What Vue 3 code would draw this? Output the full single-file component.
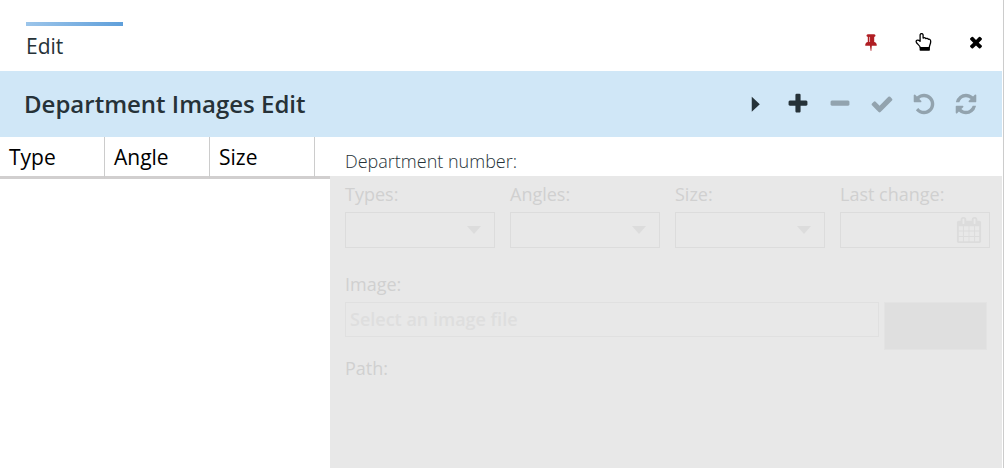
<script setup>
const times = 'M1490 1322q0 40-28 68l-136 136q-28 28-68 28t-68-28l-294-294-294 294q-28 28-68 28t-68-28l-136-136q-28-28-28-68t28-68l294-294-294-294q-28-28-28-68t28-68l136-136q28-28 68-28t68 28l294 294 294-294q28-28 68-28t68 28l136 136q28 28 28 68t-28 68l-294 294 294 294q28 28 28 68z'
const pin = 'M800 864v-448q0-14-9-23t-23-9-23 9-9 23v448q0 14 9 23t23 9 23-9 9-23zm672 352q0 26-19 45t-45 19h-429l-51 483q-2 12-10.5 20.5t-20.5 8.5h-1q-27 0-32-27l-76-485h-404q-26 0-45-19t-19-45q0-123 78.5-221.5t177.5-98.5v-512q-52 0-90-38t-38-90 38-90 90-38h640q52 0 90 38t38 90-38 90-90 38v512q99 0 177.5 98.5t78.5 221.5z'
const calendar = 'M192 1664h288v-288h-288v288zm352 0h320v-288h-320v288zm-352-352h288v-320h-288v320zm352 0h320v-320h-320v320zm-352-384h288v-288h-288v288zm736 736h320v-288h-320v288zm-384-736h320v-288h-320v288zm768 736h288v-288h-288v288zm-384-352h320v-320h-320v320zm-352-864v-288q0-13-9.5-22.5t-22.5-9.5h-64q-13 0-22.5 9.5t-9.5 22.5v288q0 13 9.5 22.5t22.5 9.5h64q13 0 22.5-9.5t9.5-22.5zm736 864h288v-320h-288v320zm-384-384h320v-288h-320v288zm384 0h288v-288h-288v288zm32-480v-288q0-13-9.5-22.5t-22.5-9.5h-64q-13 0-22.5 9.5t-9.5 22.5v288q0 13 9.5 22.5t22.5 9.5h64q13 0 22.5-9.5t9.5-22.5zm384-64v1280q0 52-38 90t-90 38h-1408q-52 0-90-38t-38-90v-1280q0-52 38-90t90-38h128v-96q0-66 47-113t113-47h64q66 0 113 47t47 113v96h384v-96q0-66 47-113t113-47h64q66 0 113 47t47 113v96h128q52 0 90 38t38 90z'

const tools = [
  { name: 'Next', path: 'M580 360v1120l600-560z' },
  { name: 'Add', path: 'M1600 736v192q0 40-28 68t-68 28h-416v416q0 40-28 68t-68 28h-192q-40 0-68-28t-28-68v-416h-416q-40 0-68-28t-28-68v-192q0-40 28-68t68-28h416v-416q0-40 28-68t68-28h192q40 0 68 28t28 68v416h416q40 0 68 28t28 68z' },
  { name: 'Remove', disabled: true, path: 'M1600 736v192q0 40-28 68t-68 28h-1216q-40 0-68-28t-28-68v-192q0-40 28-68t68-28h1216q40 0 68 28t28 68z' },
  { name: 'Save', disabled: true, path: 'M1671 566q0 40-28 68l-724 724-136 136q-28 28-68 28t-68-28l-136-136-362-362q-28-28-28-68t28-68l136-136q28-28 68-28t68 28l294 295 656-657q28-28 68-28t68 28l136 136q28 28 28 68z' },
  { name: 'Undo', disabled: true, path: 'M1664 896q0 156-61 298t-164 245-245 164-298 61q-172 0-327-72.5t-264-204.5q-7-10-6.5-22.5t8.5-20.5l137-138q10-9 25-9 16 2 23 12 73 95 179 147t225 52q104 0 198.5-40.5t163.5-109.5 109.5-163.5 40.5-198.5-40.5-198.5-109.5-163.5-163.5-109.5-198.5-40.5q-98 0-188 35.5t-160 101.5l137 138q31 30 14 69-17 40-59 40h-448q-26 0-45-19t-19-45v-448q0-42 40-59 39-17 69 14l130 129q107-101 244.5-156.5t284.5-55.5q156 0 298 61t245 164 164 245 61 298z' },
  { name: 'Refresh', disabled: true, path: 'M1639 1056q0 5-1 7-64 268-268 434.5t-478 166.5q-146 0-282.5-55t-243.5-157l-129 129q-19 19-45 19t-45-19-19-45v-448q0-26 19-45t45-19h448q26 0 45 19t19 45-19 45l-137 137q71 66 161 102t187 36q134 0 250-65t186-179q11-17 53-117 8-23 30-23h192q13 0 22.5 9.5t9.5 22.5zm25-800v448q0 26-19 45t-45 19h-448q-26 0-45-19t-19-45 19-45l138-138q-148-137-349-137-134 0-250 65t-186 179q-11 17-53 117-8 23-30 23h-199q-13 0-22.5-9.5t-9.5-22.5v-7q65-268 270-434.5t480-166.5q146 0 284 55.5t245 156.5l130-129q19-19 45-19t45 19 19 45z' },
]
const columns = ['Type', 'Angle', 'Size']
const selects = [
  { id: 'types', label: 'Types:' },
  { id: 'angles', label: 'Angles:' },
  { id: 'size', label: 'Size:' },
]
</script>

<template>
  <main class="window">
    <header class="tabbar">
      <h1 class="tab">Edit</h1>
      <div class="window-actions">
        <button type="button" class="icon-btn pin" aria-label="Pin">
          <svg viewBox="0 0 1792 1792"><path :d="pin" /></svg>
        </button>
        <button type="button" class="icon-btn" aria-label="Point">
          <svg viewBox="0 0 18 18">
            <path
              d="M5.3 14.6C5.3 12.6 1.1 10.6 1.1 8.4C1.1 6.8 3.6 6.7 5.1 8.3V2C5.1 .1 8.1 .1 8.1 2V5.1C9 4.5 10.2 4.8 10.8 5.6C11.7 5.1 12.9 5.5 13.3 6.3C14.8 5.9 15.7 6.9 15.7 8.4C15.7 11.2 14.3 12.2 14.3 14.6Z"
              fill="none" stroke="currentColor" stroke-width="1.3" stroke-linejoin="round" />
            <path d="M5.3 14h9q.6 0 .6.6v2.5q0 .7-.7.7H5.3q-.7 0-.7-.7v-2.5q0-.6.7-.6z" />
          </svg>
        </button>
        <button type="button" class="icon-btn" aria-label="Close">
          <svg viewBox="0 0 1792 1792"><path :d="times" /></svg>
        </button>
      </div>
    </header>

    <div class="titlebar">
      <h2 class="title">Department Images Edit</h2>
      <div class="toolbar">
        <button v-for="t in tools" :key="t.name" type="button" class="icon-btn tool" :disabled="t.disabled" :aria-label="t.name">
          <svg viewBox="0 0 1792 1792"><path :d="t.path" /></svg>
        </button>
      </div>
    </div>

    <div class="content">
      <section class="list">
        <table class="grid">
          <thead>
            <tr>
              <th v-for="c in columns" :key="c" scope="col">{{ c }}</th>
              <td></td>
            </tr>
          </thead>
        </table>
      </section>

      <form class="details">
        <p class="department">Department number:</p>
        <fieldset class="fields" disabled>
          <div class="row">
            <div v-for="s in selects" :key="s.id" class="field">
              <label :for="s.id">{{ s.label }}</label>
              <div class="control">
                <select :id="s.id" class="box"></select>
                <svg class="caret" viewBox="0 0 14 8"><path d="M0 0h14L7 8z" /></svg>
              </div>
            </div>
            <div class="field">
              <label for="changed">Last change:</label>
              <div class="control">
                <input id="changed" class="box" type="text" />
                <svg class="calendar" viewBox="0 0 1792 1792"><path :d="calendar" /></svg>
              </div>
            </div>
          </div>

          <div class="field image">
            <label for="image">Image:</label>
            <div class="picker">
              <input id="image" class="box file" type="text" placeholder="Select an image file" />
              <button type="button" class="browse" aria-label="Browse"></button>
            </div>
          </div>

          <p class="path">Path:</p>
        </fieldset>
      </form>
    </div>
  </main>
</template>

<style>
body {
  background: #fff;
}
</style>

<style scoped>
.window {
  display: flex;
  flex-direction: column;
  box-sizing: border-box;
  min-height: 100vh;
  margin-right: 1px;
  padding-right: 1px;
  border-right: 1px solid #ccc;
  font-family: "Open Sans", sans-serif;
  color: #263238;
}
.tabbar {
  display: flex;
  justify-content: space-between;
  align-items: flex-start;
  padding: 22px 16px 0 26px;
  height: 49px;
}
.tab {
  width: 97px;
  margin: 0;
  padding-top: 10px;
  font-size: 21px;
  line-height: 28px;
  font-weight: 500;
  background: linear-gradient(90deg, #9cc5ea, #5f9fda) top / 100% 4px no-repeat;
}
.window-actions {
  display: flex;
  gap: 32px;
  padding-top: 10px;
  color: #000;
}
.icon-btn {
  display: flex;
  align-items: center;
  justify-content: center;
  width: 20px;
  height: 20px;
  padding: 0;
  border: 0;
  background: none;
  color: inherit;
}
.icon-btn svg {
  width: 18px;
  height: 18px;
  fill: currentColor;
}
.pin {
  width: 22px;
  color: #b01e23;
}
.titlebar {
  display: flex;
  align-items: center;
  justify-content: space-between;
  height: 66px;
  padding: 0 24px;
  background: #d0e7f7;
}
.title {
  margin: 0;
  font-size: 24px;
  line-height: 32px;
  font-weight: 600;
}
.toolbar {
  display: flex;
  gap: 18px;
}
.tool {
  width: 24px;
  height: 24px;
}
.tool svg {
  width: 24px;
  height: 24px;
}
.tool:disabled {
  color: #92a3ae;
}
.content {
  display: flex;
  flex: 1;
}
.list {
  flex: 0 0 330px;
}
.grid {
  width: 100%;
  table-layout: fixed;
  border-collapse: separate;
  border-spacing: 0;
}
.grid th,
.grid td {
  box-sizing: border-box;
  height: 42px;
  padding: 0 9px;
  border-bottom: 3px solid #d1cfcf;
}
.grid td {
  padding: 0;
}
.grid th {
  width: 105px;
  border-right: 1px solid #ccc;
  font-size: 21px;
  line-height: 28px;
  font-weight: 400;
  text-align: left;
  color: #000;
}
.details {
  display: flex;
  flex-direction: column;
  flex: 1;
  font-size: 18px;
  line-height: 24px;
  font-weight: 300;
}
.department {
  margin: 0;
  padding: 12px 15px 3px;
}
.fields {
  flex: 1;
  min-width: 0;
  margin: 0;
  padding: 6px 12px 0 15px;
  border: 0;
  background: #e8e8e8;
  color: #d0d0d0;
  font-weight: 400;
}
.row {
  display: grid;
  grid-template-columns: repeat(4, 1fr);
  gap: 15px;
}
.field label {
  display: block;
  height: 30px;
}
.control {
  position: relative;
}
.box {
  display: block;
  box-sizing: border-box;
  width: 100%;
  height: 36px;
  margin: 0;
  padding: 0 4px;
  appearance: none;
  border: 1px solid #dcdcdc;
  border-radius: 0;
  background: transparent;
  color: inherit;
  font: inherit;
  opacity: 1;
}
.caret {
  position: absolute;
  top: 14px;
  right: 14px;
  width: 14px;
  height: 8px;
  fill: #dcdcdc;
}
.calendar {
  position: absolute;
  top: 5px;
  right: 8px;
  width: 26px;
  height: 26px;
  fill: #dcdcdc;
}
.image {
  margin-top: 24px;
}
.picker {
  display: flex;
  align-items: flex-start;
  gap: 5px;
  padding-right: 3px;
}
.file {
  flex: 1;
  min-width: 0;
  height: 35px;
  padding: 0 4px 2px;
  border-color: #e0e0e0;
  font-weight: 600;
}
.file::placeholder {
  color: #dedede;
  opacity: 1;
}
.browse {
  width: 103px;
  height: 48px;
  padding: 0;
  border: 1px solid #e3e3e3;
  background: #dfdfdf;
}
.path {
  margin: 6px 0 0;
}
</style>
